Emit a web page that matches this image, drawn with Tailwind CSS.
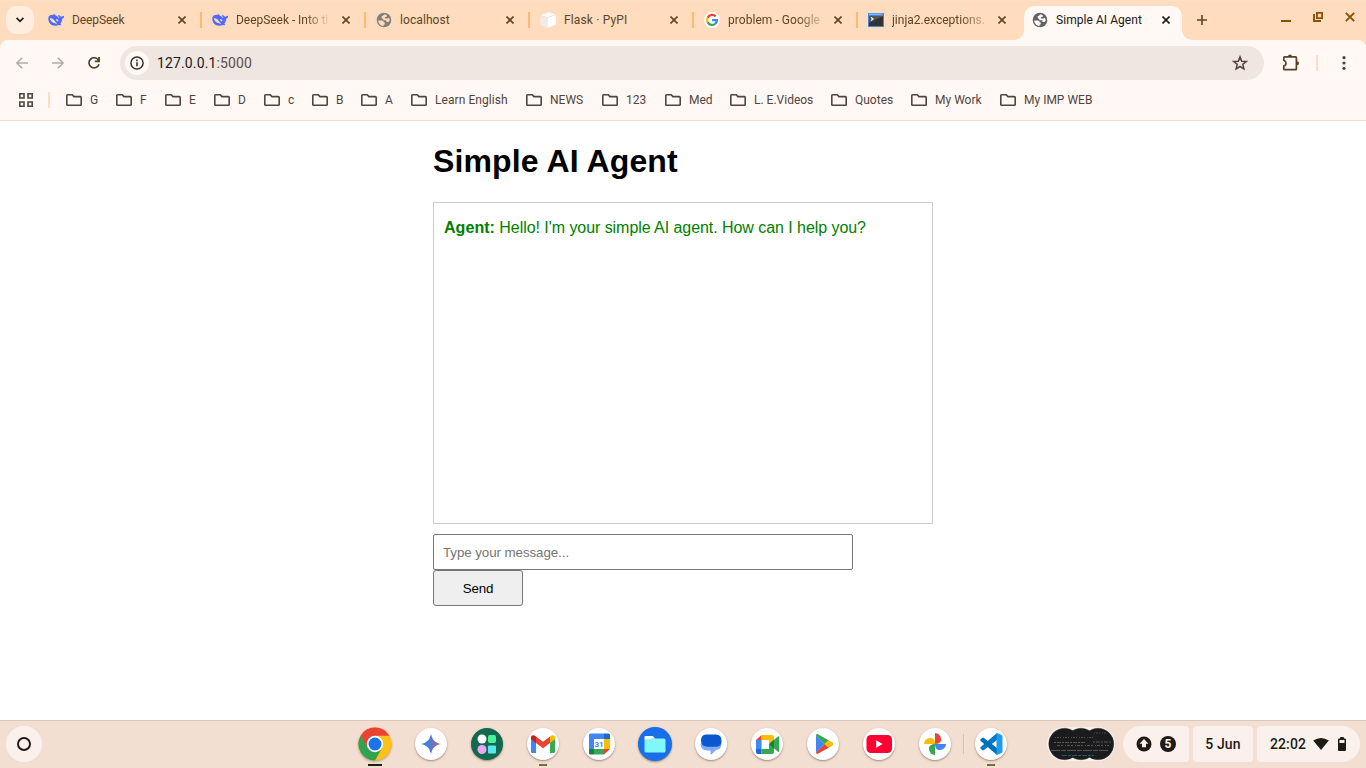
<!DOCTYPE html>
<html lang="en">
<head>
<meta charset="utf-8">
<title>Simple AI Agent</title>
<script src="https://cdn.jsdelivr.net/npm/@tailwindcss/browser@4"></script>
</head>
<body class="w-[1366px] h-[768px] overflow-hidden bg-white font-['Roboto',sans-serif] flex flex-col">
<svg class="hidden">
  <symbol id="folder" viewBox="0 0 16 12"><path d="M1.6.8h4.7l1.6 1.8h6.5c.5 0 .8.3.8.8v7c0 .5-.3.8-.8.8H1.6c-.5 0-.8-.3-.8-.8V1.6c0-.5.3-.8.8-.8z" fill="none" stroke="#52443b" stroke-width="1.6"/></symbol>
  <symbol id="x" viewBox="0 0 8 8"><path d="M.5.5l7 7M7.5.5l-7 7" fill="none" stroke="currentColor" stroke-width="1.6"/></symbol>
  <symbol id="whale" viewBox="0 0 16 16"><path fill="#4d6bfe" d="M.3 6.500C.5 4.500 1.500 3.300 3.200 3.100c1.300-.1 2.300-.6 3.400-.8.700 0 .9.400.4.700 2 .8 3.100 2.300 4.200 3.200.200-.7-.8-1.200-1-2.400-.1-.8.300-1.500.8-.9.500 1.100 1.900.9 2.300 2 .6-.6 1.500-.6 2.500-1.200.4-.1.400.300.300.9-.3 1.200-1 1.800-1.800 2-.1 2.400-1 4.100-2 5.400.7.400 1.300.500 1 1.100-.5.500-1.700.2-2.400-.2-2 1-4.800 1.100-7 .1C1.500 11.700.1 9.300.3 6.500z"/><path d="M1.900 6.400c2.100-.5 3.700 1 4.900 2.700.8 1.100 1.500 1.900 2.400 2.300-.8.700-2 .1-3-.6-.4.500-1 .1-1.700-.5C3 9 2.200 7.800 1.900 6.400z" fill="#ffdcbd"/><path d="M8.200 7.100c1-.3 2 .6 2.300 2l-1 .3c-.9-.4-1.500-1.400-1.300-2.300z" fill="#ffdcbd"/></symbol>
  <symbol id="globe" viewBox="0 0 16 16"><circle cx="8" cy="8" r="7.300" fill="currentColor"/><path d="M2.200 8.600h3.100c1.500 0 2.400.7 2.500 1.900h1v1.300c0 .7-.6 1-1.300 1v1.400C4.700 14 2.400 11.700 2.200 8.600zM9.700 2.400c-1.600 0-2.800.6-2.900 1.600H5.700v1.500c0 .9.600 1.300 1.600 1.300v1.400h3.100V10h1.800c.7 0 .8-.8 1.500-1.200 0-1.200-.2-2-.8-3-.4.5-1 .8-1.900.8H8.900V5h1c.8 0 1.100-.5 1.100-1.200z" fill="var(--land)"/></symbol>
</svg>

<!-- Tab strip -->
<header class="h-[40px] shrink-0 bg-[#ffdcbd] shadow-[inset_0_1px_0_#fbe0c8] flex items-center relative text-[12px] leading-[16px] text-[#5e4425]">
  <div class="w-[28px] h-[28px] ml-[6px] mr-[6px] rounded-[10px] bg-[#ffede0] flex items-center justify-center"><svg class="w-[8px] h-[6px]" viewBox="0 0 8 6"><path d="M.5.9L4 4.400 7.500.9" fill="none" stroke="#201a16" stroke-width="1.7"/></svg></div>
  <div class="w-[164px] h-[28px] flex items-center pl-[8px]"><svg class="w-4 h-4 mr-2"><use href="#whale"/></svg><span class="w-[92px] whitespace-nowrap overflow-hidden tracking-[-0.1px]">DeepSeek</span><svg class="w-2 h-2 ml-[14px]"><use href="#x"/></svg><i class="w-[2px] h-4 bg-[#ffb871] ml-[14px]"></i></div>
  <div class="w-[164px] h-[28px] flex items-center pl-[8px]"><svg class="w-4 h-4 mr-2"><use href="#whale"/></svg><span class="w-[92px] whitespace-nowrap overflow-hidden tracking-[-0.04px] [mask-image:linear-gradient(to_right,#000_75%,transparent_102%)]">DeepSeek - Into the Unknown</span><svg class="w-2 h-2 ml-[14px]"><use href="#x"/></svg><i class="w-[2px] h-4 bg-[#ffb871] ml-[14px]"></i></div>
  <div class="w-[164px] h-[28px] flex items-center pl-[8px]"><svg class="w-4 h-4 mr-2 text-[#83807c] [--land:#ffdcbd]"><use href="#globe"/></svg><span class="w-[92px] whitespace-nowrap overflow-hidden tracking-[0.08px]">localhost</span><svg class="w-2 h-2 ml-[14px]"><use href="#x"/></svg><i class="w-[2px] h-4 bg-[#ffb871] ml-[14px]"></i></div>
  <div class="w-[164px] h-[28px] flex items-center pl-[8px]"><svg class="w-4 h-4 mr-2" viewBox="0 0 16 16"><path d="M.4 3.200L9 .3l6.800 2.400v10L7.200 15.700.4 13z" fill="#efedea"/><path d="M.4 3.200L9 .3l6.800 2.400-8.600 3z" fill="#fbfaf8"/><path d="M7.200 5.700l8.600-3v10l-8.600 3z" fill="#fff"/><path d="M.4 3.200l6.800 2.500 8.600-3M7.200 5.700v10" fill="none" stroke="#dcd9d3" stroke-width=".6"/></svg><span class="w-[92px] whitespace-nowrap overflow-hidden tracking-[0.15px]">Flask · PyPI</span><svg class="w-2 h-2 ml-[14px]"><use href="#x"/></svg><i class="w-[2px] h-4 bg-[#ffb871] ml-[14px]"></i></div>
  <div class="w-[164px] h-[28px] flex items-center pl-[8px]"><svg class="w-4 h-4 mr-2" viewBox="0 0 16 16"><circle cx="8" cy="8" r="8" fill="#fff"/><g fill="none" stroke-width="2.300"><path d="M11.600 4.300A5 5 0 0 0 3.600 5.800" stroke="#ea4335"/><path d="M3.600 5.700a5 5 0 0 0 0 4.600" stroke="#fbbc05"/><path d="M3.600 10.200a5 5 0 0 0 7.600 1.600" stroke="#34a853"/><path d="M8.100 8.100h4.800c0 1.600-.6 2.800-1.700 3.700" stroke="#4285f4"/></g></svg><span class="w-[92px] whitespace-nowrap overflow-hidden tracking-[0.05px] [mask-image:linear-gradient(to_right,#000_75%,transparent_108%)]">problem - Google Search</span><svg class="w-2 h-2 ml-[14px]"><use href="#x"/></svg><i class="w-[2px] h-4 bg-[#ffb871] ml-[14px]"></i></div>
  <div class="w-[164px] h-[28px] flex items-center pl-[8px]"><svg class="w-4 h-4 mr-2" viewBox="0 0 16 16"><path fill="#4385df" d="M0 1h16v14H0z"/><path fill="#86b7f4" d="M1 1.500h14v1.400H1z"/><path fill="#303438" d="M1 4h14v10H1z"/><path fill="#50555a" d="M1 4h14L1 11z"/><path d="M3 5.500l2 1.500-2 1.500" fill="none" stroke="#fff" stroke-width="1.200"/><path fill="#e66" d="M13 1.500h2v1.400h-2z"/></svg><span class="w-[92px] whitespace-nowrap overflow-hidden [mask-image:linear-gradient(to_right,#000_75%,transparent_108%)]">jinja2.exceptions.TemplateNotFound</span><svg class="w-2 h-2 ml-[14px]"><use href="#x"/></svg></div>
  <div class="w-[158px] h-[34px] self-end rounded-t-[10px] bg-[#fff8f5] text-[#201a16] flex items-center pl-[8px] pb-[6px] relative">
    <svg class="absolute -left-[10px] bottom-0 w-[10px] h-[10px]" viewBox="0 0 10 10"><path d="M10 0v10H0A10 10 0 0 0 10 0z" fill="#fff8f5"/></svg>
    <svg class="absolute -right-[10px] bottom-0 w-[10px] h-[10px]" viewBox="0 0 10 10"><path d="M0 0v10h10A10 10 0 0 1 0 0z" fill="#fff8f5"/></svg>
    <svg class="w-4 h-4 mr-2 text-[#5f6368] [--land:#fff8f5]"><use href="#globe"/></svg><span class="w-[92px] whitespace-nowrap tracking-[0.05px]">Simple AI Agent</span><svg class="w-2 h-2 ml-[14px]"><use href="#x"/></svg>
  </div>
  <svg class="w-[10px] h-[10px] ml-[15px]" viewBox="0 0 10 10"><path d="M5 0v10M0 5h10" stroke="#5e4425" stroke-width="1.600"/></svg>
  <div class="ml-auto mr-[11px] mb-[6px] flex items-center text-[#8a5100]">
    <i class="w-[10px] h-[2px] mt-[8px] bg-[#8a5100] mr-[22px]"></i>
    <svg class="w-[10px] h-[10px] mr-[22px]" viewBox="0 0 10 10"><path d="M3.900.9h5.200v5.200H3.900zM1 2v7h7" fill="none" stroke="currentColor" stroke-width="1.900"/></svg>
    <svg class="w-[10px] h-[10px]" viewBox="0 0 10 10"><path d="M.8.8l8.400 8.400M9.200.8L.8 9.200" stroke="currentColor" stroke-width="1.900"/></svg>
  </div>
</header>

<!-- Toolbar and bookmarks -->
<div class="h-[81px] shrink-0 bg-[#ffdcbd]">
  <div class="h-[81px] rounded-t-[8px] bg-[#fff8f5] border-b border-[#f4dfcf]">
    <div class="h-[40px] pt-[6px] flex items-center">
      <svg class="w-[12px] h-[12px] ml-[16px]" viewBox="0 0 12 12"><path d="M12 6H1M6.200.7L.9 6l5.300 5.300" fill="none" stroke="#b7aaa3" stroke-width="1.500"/></svg>
      <svg class="w-[12px] h-[12px] ml-[24px]" viewBox="0 0 12 12"><path d="M0 6h11M5.800.7L11.100 6l-5.300 5.300" fill="none" stroke="#b7aaa3" stroke-width="1.500"/></svg>
      <svg class="w-[12px] h-[12px] ml-[24px]" viewBox="0 0 12 12"><path d="M10.400 3.100A5.100 5.100 0 1 0 11 7.200M11.100 0v4.400H6.800" fill="none" stroke="#5a4025" stroke-width="1.700"/></svg>
      <div class="ml-[20px] w-[1144px] h-[34px] rounded-full bg-[#efe6e1] flex items-center pl-[5px]">
        <div class="w-6 h-6 rounded-full bg-[#fff8f5] flex items-center justify-center"><svg class="w-[14px] h-[14px]" viewBox="0 0 14 14"><circle cx="7" cy="7" r="6.100" fill="none" stroke="#3b302a" stroke-width="1.500"/><path d="M6.200 6.200h1.600V10.300H6.200zM6.200 3.600h1.600v1.600H6.200z" fill="#3b302a"/></svg></div>
        <span class="ml-2 text-[14px] leading-[20px] tracking-[0.13px] text-[#201a16]">127.0.0.1<span class="text-[#5c4f48]">:5000</span></span>
        <svg class="w-[16px] h-[16px] ml-auto mr-[16px]" viewBox="0 0 16 16"><path d="M8 1.900l1.700 4.300 4.600.3-3.500 2.900 1.100 4.500L8 11.500l-3.900 2.400 1.100-4.500L1.700 6.500l4.600-.3z" fill="none" stroke="#52443b" stroke-width="1.500"/></svg>
      </div>
      <svg class="w-[18px] h-[18px] ml-[18px]" viewBox="0 0 18 18"><path d="M1.800 6.300V3.700c0-.5.3-.8.8-.8h11c.5 0 .8.3.8.8v11.200c0 .5-.3.8-.8.8h-11c-.5 0-.8-.3-.8-.8V12c1.400-.4 2.200-1.400 2.200-2.700S3.200 6.900 1.800 6.300z" fill="none" stroke="#5a4025" stroke-width="1.700"/><path d="M6 2.500a2 2 0 0 1 4 0zM15 7.200a2 2 0 0 1 0 4z" fill="#5a4025"/></svg>
      <i class="w-[2px] h-4 bg-[#ffdcbd] ml-[16px]"></i>
      <svg class="w-[4px] h-[14px] ml-[24px]" viewBox="0 0 4 14"><g fill="#5a4025"><circle cx="2" cy="1.700" r="1.600"/><circle cx="2" cy="7" r="1.600"/><circle cx="2" cy="12.300" r="1.600"/></g></svg>
    </div>
    <div class="h-[40px] pl-[19px] flex items-center text-[12px] leading-[16px] text-[#52443b] whitespace-nowrap">
      <svg class="w-[14px] h-[14px]" viewBox="0 0 14 14"><path d="M.8.8h4.200v4.200H.8zM9 .8h4.200v4.200H9zM.8 9h4.200v4.200H.8zM9 9h4.200v4.200H9z" fill="none" stroke="#52443b" stroke-width="1.600"/></svg>
      <i class="w-[2px] h-4 bg-[#ffdcbd] ml-[15px] mr-[16px]"></i>
      <div class="w-[50px] flex items-center gap-2"><svg class="w-4 h-3 shrink-0"><use href="#folder"/></svg>G</div>
      <div class="w-[49px] flex items-center gap-2"><svg class="w-4 h-3 shrink-0"><use href="#folder"/></svg>F</div>
      <div class="w-[49px] flex items-center gap-2"><svg class="w-4 h-3 shrink-0"><use href="#folder"/></svg>E</div>
      <div class="w-[50px] flex items-center gap-2"><svg class="w-4 h-3 shrink-0"><use href="#folder"/></svg>D</div>
      <div class="w-[48px] flex items-center gap-2"><svg class="w-4 h-3 shrink-0"><use href="#folder"/></svg>c</div>
      <div class="w-[49px] flex items-center gap-2"><svg class="w-4 h-3 shrink-0"><use href="#folder"/></svg>B</div>
      <div class="w-[50px] flex items-center gap-2"><svg class="w-4 h-3 shrink-0"><use href="#folder"/></svg>A</div>
      <div class="w-[115px] flex items-center gap-2 tracking-[0.07px]"><svg class="w-4 h-3 shrink-0"><use href="#folder"/></svg>Learn English</div>
      <div class="w-[76px] flex items-center gap-2"><svg class="w-4 h-3 shrink-0"><use href="#folder"/></svg>NEWS</div>
      <div class="w-[63px] flex items-center gap-2"><svg class="w-4 h-3 shrink-0"><use href="#folder"/></svg>123</div>
      <div class="w-[65px] flex items-center gap-2"><svg class="w-4 h-3 shrink-0"><use href="#folder"/></svg>Med</div>
      <div class="w-[101px] flex items-center gap-2"><svg class="w-4 h-3 shrink-0"><use href="#folder"/></svg>L. E.Videos</div>
      <div class="w-[80px] flex items-center gap-2"><svg class="w-4 h-3 shrink-0"><use href="#folder"/></svg>Quotes</div>
      <div class="w-[89px] flex items-center gap-2"><svg class="w-4 h-3 shrink-0"><use href="#folder"/></svg>My Work</div>
      <div class="flex items-center gap-2"><svg class="w-4 h-3 shrink-0"><use href="#folder"/></svg>My IMP WEB</div>
    </div>
  </div>
</div>

<!-- Page -->
<main class="h-[599px] shrink-0 font-['Liberation_Sans',sans-serif] text-black">
  <div class="w-[500px] mx-auto pt-[22px]">
    <h1 class="text-[32px] leading-[37px] font-bold mb-[22px] tracking-[0.12px]">Simple AI Agent</h1>
    <div class="h-[322px] border border-[#ccc] p-[10px]"><p class="mt-[6px] text-[16px] leading-[18px] tracking-[-0.055px] text-[#008000]"><strong class="tracking-[0.05px]">Agent:</strong> Hello! I'm your simple AI agent. How can I help you?</p></div>
    <input class="block mt-[10px] w-[420px] h-[36px] border border-[#767676] rounded-[2px] px-[9px] text-[13.333px] tracking-[-0.07px] placeholder:text-[#757575]" placeholder="Type your message...">
    <button class="block w-[90px] h-[36px] pt-[2px] border border-[#767676] rounded-[3px] bg-[#efefef] text-[13.333px] tracking-[-0.1px]">Send</button>
  </div>
</main>

<!-- Shelf -->
<footer class="h-[48px] shrink-0 bg-[#f2dfd1] shadow-[inset_0_1px_0_#d9c8bc] flex items-center">
  <div class="w-[36px] h-[36px] ml-[6px] rounded-full bg-[#fbf1ec] flex items-center justify-center"><i class="w-[14px] h-[14px] rounded-full border-2 border-[#201a16]"></i></div>
  <div class="ml-[305px] h-full flex text-[#201a16]">
    <div class="w-[56px] h-full flex flex-col items-center pt-[7px]">
      <svg class="w-[34px] h-[34px] drop-shadow-[0_1px_1px_rgba(80,50,30,.4)]" viewBox="0 0 34 34"><circle cx="17" cy="17" r="16.500" fill="#fbc116"/><path d="M17 17L2.700 8.750A16.500 16.500 0 0 0 17 33.500l7.100-12.400z" fill="#31a350"/><path d="M17 17V8.750h14.300A16.500 16.500 0 0 0 2.700 8.750l7.200 12.350z" fill="#ea4335"/><circle cx="17" cy="17" r="8.200" fill="#fff"/><circle cx="17" cy="17" r="6.500" fill="#1a73e8"/></svg>
      <i class="w-[14px] h-[2px] mt-[3px] bg-[#201a16]"></i>
    </div>
    <div class="w-[56px] flex justify-center pt-[8px]"><svg class="w-[32px] h-[32px] rounded-full bg-white shadow-[0_1px_2px_rgba(80,50,30,.5)]" viewBox="0 0 32 32"><defs><linearGradient id="gem"><stop stop-color="#1c93dc"/><stop offset=".5" stop-color="#5b78cc"/><stop offset="1" stop-color="#c65f8e"/></linearGradient></defs><path d="M16 6c1.500 6 4 8.500 10 10-6 1.500-8.500 4-10 10-1.500-6-4-8.500-10-10 6-1.500 8.500-4 10-10z" fill="url(#gem)"/></svg></div>
    <div class="w-[56px] flex justify-center pt-[8px]"><svg class="w-[32px] h-[32px] rounded-full bg-[#12694f] shadow-[0_1px_2px_rgba(80,50,30,.5)]" viewBox="0 0 32 32"><circle cx="11" cy="11" r="4.500" fill="#fff"/><rect x="17" y="7" width="8" height="8" rx="2" fill="#4af29b"/><circle cx="11" cy="21.500" r="4.500" fill="#eaa6f2"/><rect x="17" y="17.500" width="8" height="8" rx="1" fill="#57e9ed"/></svg></div>
    <div class="w-[56px] flex flex-col items-center pt-[8px]"><svg class="w-[32px] h-[32px] shrink-0 rounded-full bg-white shadow-[0_1px_2px_rgba(80,50,30,.5)]" viewBox="0 0 32 32"><path d="M4 9.500l5 3.700V25H5.500A1.500 1.500 0 0 1 4 23.500z" fill="#4285f4"/><path d="M23 13.200l5-3.700v14a1.500 1.500 0 0 1-1.500 1.500H23z" fill="#34a853"/><path d="M9 8.500l7 5.300 7-5.300v6.500l-7 5.300L9 15z" fill="#ea4335"/><path d="M4 9.500C4 7 6.500 6.500 9 8.500V15l-5-3.700z" fill="#c5221f"/><path d="M28 9.500C28 7 25.500 6.500 23 8.500V15l5-3.700z" fill="#fbbc04"/></svg><i class="w-[8px] h-[2px] mt-[4px] bg-[#7e654d]"></i></div>
    <div class="w-[56px] flex justify-center pt-[8px]"><svg class="w-[32px] h-[32px] rounded-full bg-white shadow-[0_1px_2px_rgba(80,50,30,.5)]" viewBox="0 0 32 32"><path d="M6 7a1.500 1.500 0 0 1 1.500-1.500H21V11H11v10H6z" fill="#4285f4"/><path d="M21 5.500h4.500A1.500 1.500 0 0 1 27 7v4h-6z" fill="#1967d2"/><path d="M21 11h6v10h-6z" fill="#fbbc04"/><path d="M11 21h10v5.500H11z" fill="#34a853"/><path d="M6 21h5v5.500H7.500A1.500 1.500 0 0 1 6 25z" fill="#188038"/><path d="M21 21h6l-6 5.500z" fill="#ea4335"/><path d="M11 11h10v10H11z" fill="#fff"/><text x="16" y="19" text-anchor="middle" font-family="Roboto" font-weight="700" font-size="8" fill="#4285f4">31</text></svg></div>
    <div class="w-[56px] flex justify-center pt-[7px]"><svg class="w-[34px] h-[34px] rounded-full bg-[#1a6fe8] shadow-[0_1px_2px_rgba(80,50,30,.5)]" viewBox="0 0 34 34"><rect x="6.500" y="11.500" width="21" height="14" rx="1.500" fill="#80f7f8"/><path d="M6.500 12.500V10q0-1 1-1h6.500q1 0 1.600.8L17 11.500z" fill="#fff"/></svg></div>
    <div class="w-[56px] flex justify-center pt-[8px]"><svg class="w-[32px] h-[32px] rounded-full bg-white shadow-[0_1px_2px_rgba(80,50,30,.5)]" viewBox="0 0 32 32"><path d="M10 12h13.500q3 0 3 3.500 0 6-5.500 6.500l-4 4q-1.500 1.200-1.500-.8V22.500H12q-6-.5-6.500-6.500z" fill="#7faaf8"/><path d="M11 6.500h10q5.500.3 5.500 6t-4.500 6.200H12q-6-.5-6-6.200t5-6z" fill="#0b57d0"/></svg></div>
    <div class="w-[56px] flex justify-center pt-[8px]"><svg class="w-[32px] h-[32px] rounded-full bg-white shadow-[0_1px_2px_rgba(80,50,30,.5)]" viewBox="0 0 32 32"><path d="M5 12l5.500-5v5z" fill="#ea4335"/><path d="M5 12h5.500v9H5z" fill="#4285f4"/><path d="M5 21h5.500v5H7a2 2 0 0 1-2-2z" fill="#1967d2"/><path d="M10.500 7H21a2 2 0 0 1 2 2v6h-5v-3h-7.500z" fill="#fbbc04"/><path d="M10.500 21H18v-5h5v8a2 2 0 0 1-2 2H10.500z" fill="#34a853"/><path d="M18 16l9-7.500q1.200-.5 1.200.7v14q0 1-1.200.6z" fill="#34a853"/><path d="M18 16l5-4.200v8.600z" fill="#188038"/></svg></div>
    <div class="w-[56px] flex justify-center pt-[8px]"><svg class="w-[32px] h-[32px] rounded-full bg-white shadow-[0_1px_2px_rgba(80,50,30,.5)]" viewBox="0 0 32 32"><path d="M9 7.500v17L17.500 16z" fill="#4285f4"/><path d="M9 7.500c.2-1.500 1.200-1.700 2.400-1L22 12.500 17.500 16z" fill="#34a853"/><path d="M9 24.500c.2 1.500 1.200 1.700 2.400 1L22 19.500 17.500 16z" fill="#ea4335"/><path d="M21.500 12.300l4 2.300q1.800 1.400 0 2.800l-4 2.300L17.500 16z" fill="#fbbc04"/></svg></div>
    <div class="w-[56px] flex justify-center pt-[8px]"><svg class="w-[32px] h-[32px] rounded-full bg-white shadow-[0_1px_2px_rgba(80,50,30,.5)]" viewBox="0 0 32 32"><rect x="3.500" y="7" width="25.500" height="18" rx="4.500" fill="#ff0033"/><path d="M13.200 12.200v7.600l6.500-3.800z" fill="#fff"/></svg></div>
    <div class="w-[56px] flex justify-center pt-[8px]"><svg class="w-[32px] h-[32px] rounded-full bg-white shadow-[0_1px_2px_rgba(80,50,30,.5)]" viewBox="0 0 32 32"><path d="M16 16V5a6 6 0 0 1 6 6v1.500Q21 16 16 16z" fill="#ea4335"/><path d="M16 16h11a6 6 0 0 1-6 6h-1.500Q16 21 16 16z" fill="#4285f4"/><path d="M16 16v11a6 6 0 0 1-6-6v-1.500Q11 16 16 16z" fill="#34a853"/><path d="M16 16H5a6 6 0 0 1 6-6h1.500Q16 11 16 16z" fill="#fbbc04"/></svg></div>
    <i class="w-px h-5 self-center bg-[#dcc3b1]"></i>
    <div class="w-[54px] flex flex-col items-center pt-[8px]"><svg class="w-[32px] h-[32px] shrink-0 rounded-full bg-white shadow-[0_1px_2px_rgba(80,50,30,.5)]" viewBox="0 0 32 32"><path d="M22 5v7L9 22.100q-.8.600-1.500.100l-1.800-1.400q-1-.9 0-1.700z" fill="#007acc"/><path d="M22 27v-7L9 9.900q-.8-.6-1.500-.1l-1.800 1.400q-1 .9 0 1.700z" fill="#0070ba"/><path d="M21.500 4.800l5 2.300q1 .5 1 1.600v14.600q0 1.100-1 1.600l-5 2.300z" fill="#1f9cf0"/></svg><i class="w-[8px] h-[2px] mt-[4px] bg-[#7e654d]"></i></div>
  </div>
  <div class="ml-auto mr-[6px] flex items-center text-[14px] font-medium text-[#201a16]">
    <svg class="w-[68px] h-[34px] mr-[8px]" viewBox="0 0 68 34"><rect width="68" height="34" rx="17" fill="#fbf1ec"/><g fill="#191b1c" stroke="#303233" stroke-width=".3"><circle cx="51" cy="17" r="15.800"/><circle cx="34" cy="17" r="15.800"/><circle cx="17.500" cy="17" r="15.800"/></g><g fill="none" stroke-width="1.200"><path d="M8 10.500h38M47 6h12" stroke="#65483e" stroke-dasharray="1 1 2 1 1 2"/><path d="M7 15.500h31M46 15h18" stroke="#485d66" stroke-dasharray="2 1 4 1"/><path d="M10 18.500h52" stroke="#7a4b3d" stroke-dasharray="3 1 2 2 1 1"/><path d="M4 23.500h58" stroke="#555" stroke-dasharray="9 1 5 1"/><path d="M15 28.500h32" stroke="#245a65" stroke-dasharray="5 1 3 1"/></g></svg>
    <div class="w-[66px] h-[36px] rounded-l-[18px] rounded-r-[4px] bg-[#fbf1ec] flex items-center pl-[13px] mr-[4px]">
      <svg class="w-4 h-4" viewBox="0 0 16 16"><circle cx="8" cy="8" r="7.500" fill="#201a16"/><path d="M8 3l4.500 4.800H10v3.500H6V7.800H3.500z" fill="#fbf1ec"/></svg>
      <span class="w-4 h-4 ml-2 rounded-full bg-[#201a16] text-[#fbf1ec] text-[12px] leading-[16px] font-bold text-center">5</span>
    </div>
    <div class="w-[60px] h-[36px] rounded-[4px] bg-[#fbf1ec] flex items-center justify-center mr-[4px] tracking-[0.1px]">5 Jun</div>
    <div class="w-[103px] h-[36px] rounded-l-[4px] rounded-r-[18px] bg-[#fbf1ec] flex items-center pl-[13px]"><span class="w-[36px] tracking-[0.1px]">22:02</span>
      <svg class="w-[16px] h-[12px] ml-[7px]" viewBox="0 0 16 12"><path d="M8 12L.2 2.500Q8-2.500 15.800 2.500z" fill="#201a16"/></svg>
      <svg class="w-[8px] h-[14px] ml-[9px]" viewBox="0 0 8 14"><path d="M2.200 0h3.600v1.400H7q1 0 1 1V13q0 1-1 1H1q-1 0-1-1V2.400q0-1 1-1h1.200zM1.500 3v3h5V3z" fill="#201a16" fill-rule="evenodd"/></svg>
    </div>
  </div>
</footer>
</body>
</html>
